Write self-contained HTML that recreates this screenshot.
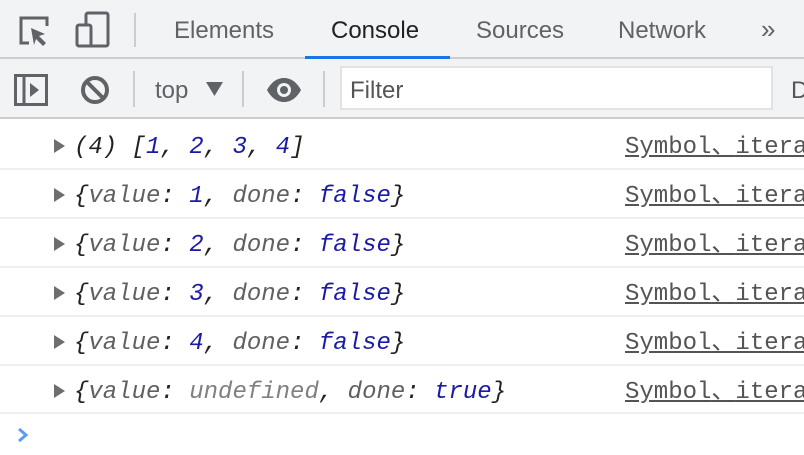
<!DOCTYPE html>
<html><head><meta charset="utf-8"><style>
*{margin:0;padding:0;box-sizing:border-box}
body{width:804px;height:455px;overflow:hidden;background:#fff;font-family:"Liberation Sans",sans-serif;position:relative}
.bar1{position:absolute;left:0;top:0;width:804px;height:59px;background:#f1f3f4;border-bottom:2px solid #cbcdd1}
.bar2{position:absolute;left:0;top:59px;width:804px;height:60px;background:#f1f3f4;border-bottom:2px solid #cbcdd1}
.tab{position:absolute;top:17px;font-size:24px;color:#5f6368;line-height:28px}
.sep{position:absolute;width:2px;background:#cbcdd1}
.mono{font-family:"Liberation Mono",monospace;font-size:24px;line-height:30px;font-style:italic;position:absolute;left:74px;color:#222;white-space:pre}
.row{position:absolute;left:0;width:804px;border-bottom:2px solid #efefef}
.tri{position:absolute;left:54px;width:0;height:0;border-top:7px solid transparent;border-bottom:7px solid transparent;border-left:11px solid #6e6e6e}
.k{color:#606060}.n{color:#1a1aa6}.u{color:#808080}
.link{position:absolute;left:625px;font-family:"Liberation Mono",monospace;font-size:24px;line-height:30px;color:#545454;text-decoration:underline;white-space:pre}
.link span{font-family:"Noto Sans CJK SC",sans-serif;font-size:24px}
</style></head><body>
<div class="bar1"></div>
<div class="bar2"></div>
<svg style="position:absolute;left:17px;top:14px" width="34" height="34" viewBox="0 0 34 34" fill="none" stroke="#5f6368" stroke-width="3">
<path d="M12 29H4V4h26v8"/><path d="M14 14l14 6-6 2 7 7-3 3-7-7-2 6z" fill="#5f6368" stroke="none"/></svg>
<svg style="position:absolute;left:75px;top:11px" width="36" height="38" viewBox="0 0 36 38" fill="none" stroke="#5f6368" stroke-width="3">
<rect x="11" y="2" width="22" height="33" rx="2"/><rect x="2" y="14" width="14" height="21" rx="2" fill="#f1f3f4"/></svg>
<div class="sep" style="left:134px;top:13px;height:34px"></div>
<div class="tab" style="left:174px">Elements</div>
<div class="tab" style="left:331px;color:#202124">Console</div>
<div style="position:absolute;left:305px;top:56px;width:145px;height:3px;background:#1a73e8"></div>
<div class="tab" style="left:476px">Sources</div>
<div class="tab" style="left:618px">Network</div>
<div class="tab" style="left:761px;font-size:26px;top:15px">»</div>
<svg style="position:absolute;left:14px;top:74px" width="34" height="32" viewBox="0 0 34 32" fill="none" stroke="#5f6368" stroke-width="3">
<rect x="1.5" y="1.5" width="31" height="29"/><line x1="10" y1="2" x2="10" y2="30"/><path d="M16 9l9 7-9 7z" fill="#5f6368" stroke="none"/></svg>
<svg style="position:absolute;left:80px;top:75px" width="30" height="30" viewBox="0 0 30 30" fill="none" stroke="#5f6368" stroke-width="4">
<circle cx="15" cy="15" r="12"/><line x1="7" y1="7" x2="23" y2="23"/></svg>
<div class="sep" style="left:133px;top:71px;height:36px"></div>
<div class="tab" style="left:155px;top:77px">top</div>
<svg style="position:absolute;left:206px;top:82px" width="17" height="14"><path d="M0 0h17L8.5 14z" fill="#5f6368"/></svg>
<div class="sep" style="left:242px;top:71px;height:36px"></div>
<svg style="position:absolute;left:266px;top:77px" width="36" height="26" viewBox="0 0 36 26"><path d="M1 13C6 4 12 1 18 1s12 3 17 12C30 22 24 25 18 25S6 22 1 13z" fill="#5f6368"/><circle cx="18" cy="13" r="7" fill="#f1f3f4"/><circle cx="18" cy="13" r="4" fill="#5f6368"/></svg>
<div class="sep" style="left:323px;top:71px;height:36px"></div>
<div style="position:absolute;left:340px;top:66px;width:433px;height:44px;background:#fff;border:2px solid #e2e2e2"></div>
<div class="tab" style="left:350px;top:77px;color:#555">Filter</div>
<div class="tab" style="left:791px;top:77px;color:#555">D</div>
<div class="row" style="top:121px;height:49px"></div>
<div class="row" style="top:170px;height:49px"></div>
<div class="row" style="top:219px;height:49px"></div>
<div class="row" style="top:268px;height:49px"></div>
<div class="row" style="top:317px;height:49px"></div>
<div class="row" style="top:366px;height:48px"></div>
<div class="tri" style="top:139px"></div>
<div class="mono" style="top:133px">(4) [<span class="n">1</span>, <span class="n">2</span>, <span class="n">3</span>, <span class="n">4</span>]</div>
<div class="tri" style="top:188px"></div>
<div class="mono" style="top:182px">{<span class="k">value</span>: <span class="n">1</span>, <span class="k">done</span>: <span class="n">false</span>}</div>
<div class="tri" style="top:237px"></div>
<div class="mono" style="top:231px">{<span class="k">value</span>: <span class="n">2</span>, <span class="k">done</span>: <span class="n">false</span>}</div>
<div class="tri" style="top:286px"></div>
<div class="mono" style="top:280px">{<span class="k">value</span>: <span class="n">3</span>, <span class="k">done</span>: <span class="n">false</span>}</div>
<div class="tri" style="top:335px"></div>
<div class="mono" style="top:329px">{<span class="k">value</span>: <span class="n">4</span>, <span class="k">done</span>: <span class="n">false</span>}</div>
<div class="tri" style="top:384px"></div>
<div class="mono" style="top:378px">{<span class="k">value</span>: <span class="u">undefined</span>, <span class="k">done</span>: <span class="n">true</span>}</div>
<div class="link" style="top:128px">Symbol<span>、</span>itera</div>
<div class="link" style="top:177px">Symbol<span>、</span>itera</div>
<div class="link" style="top:226px">Symbol<span>、</span>itera</div>
<div class="link" style="top:275px">Symbol<span>、</span>itera</div>
<div class="link" style="top:324px">Symbol<span>、</span>itera</div>
<div class="link" style="top:373px">Symbol<span>、</span>itera</div>
<svg style="position:absolute;left:17px;top:427px" width="12" height="16"><path d="M2 2l7 6-7 6" fill="none" stroke="#5b9cf4" stroke-width="3"/></svg>
</body></html>
